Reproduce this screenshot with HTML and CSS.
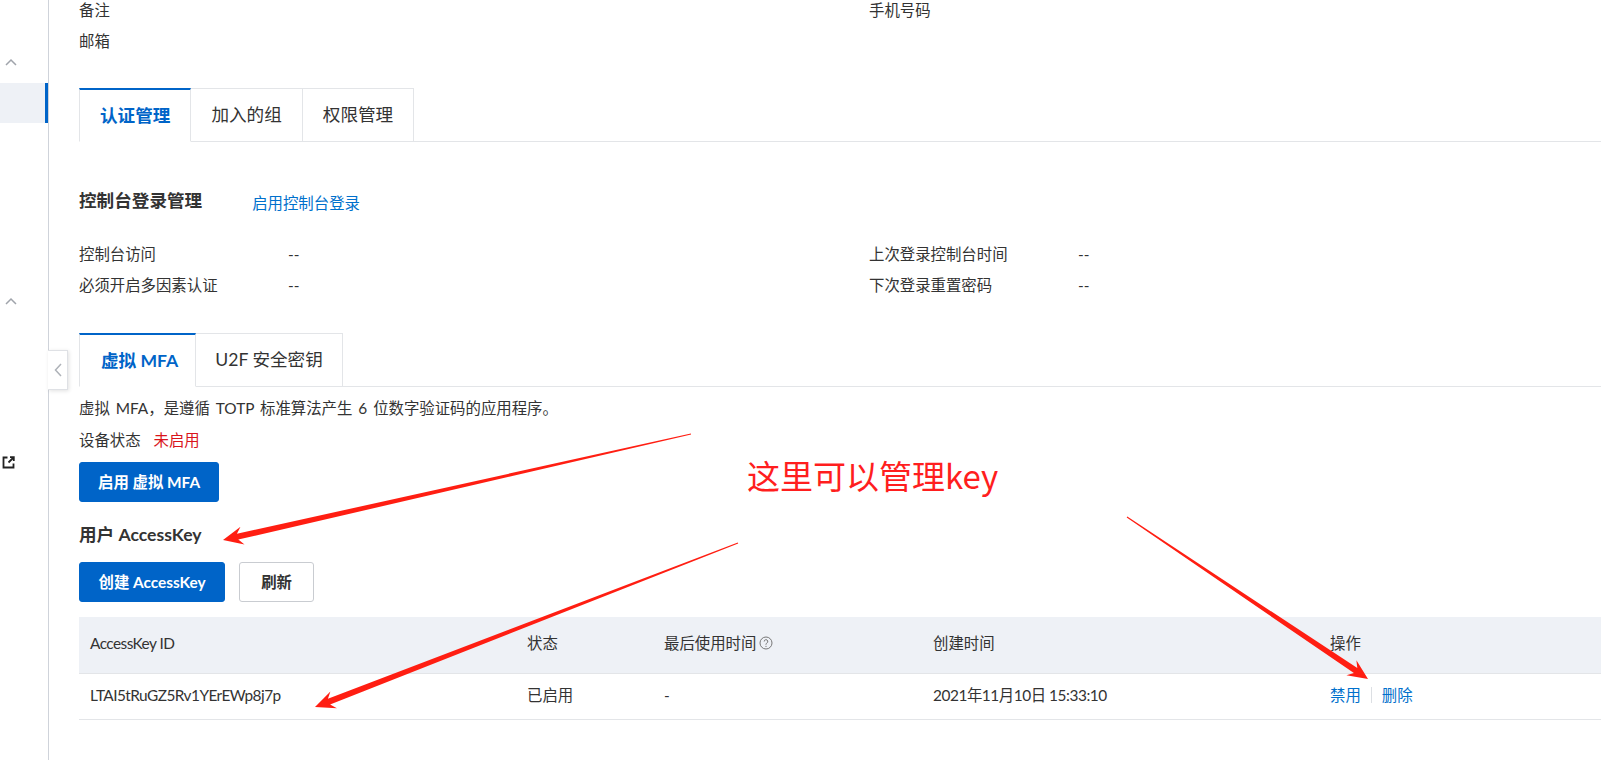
FILE: index.html
```html
<!DOCTYPE html>
<html lang="zh-CN">
<head>
<meta charset="utf-8">
<title>RAM 用户</title>
<link rel="stylesheet" href="styles.css">
</head>
<body>
<div class="page">
  <aside class="sidebar">
    <div class="nav-gap nav-gap-top"></div>
    <div class="nav-head">
      <svg class="chev" width="12" height="8" viewBox="0 0 12 8"><path d="M1 7L6 2l5 5" fill="none" stroke="#a0a4ab" stroke-width="1.5"/></svg>
    </div>
    <div class="nav-item is-active"></div>
    <div class="nav-gap nav-gap-mid"></div>
    <div class="nav-head">
      <svg class="chev" width="12" height="8" viewBox="0 0 12 8"><path d="M1 7L6 2l5 5" fill="none" stroke="#a0a4ab" stroke-width="1.5"/></svg>
    </div>
    <div class="nav-gap nav-gap-low"></div>
    <div class="nav-item">
      <svg class="ext" width="13" height="13" viewBox="0 0 13 13"><path d="M5.5 1.5H1.5v10h10V7.5" fill="none" stroke="#222" stroke-width="1.8"/><path d="M6.5 6.5l5-5M8 1.2h3.8V5" fill="none" stroke="#222" stroke-width="1.8"/></svg>
    </div>
  </aside>

  <main class="main">
    <div class="kv-grid top-info">
      <div class="kv">备注</div>
      <div class="kv">手机号码</div>
      <div class="kv">邮箱</div>
      <div class="kv"></div>
    </div>

    <div class="tabs main-tabs">
      <div class="tab is-active">认证管理</div>
      <div class="tab">加入的组</div>
      <div class="tab">权限管理</div>
    </div>

    <div class="section-head">
      <h2 class="section-title">控制台登录管理</h2>
      <a class="head-link">启用控制台登录</a>
    </div>

    <div class="kv-grid login-info">
      <div class="kv"><span class="kv-label">控制台访问</span><span>--</span></div>
      <div class="kv"><span class="kv-label">上次登录控制台时间</span><span>--</span></div>
      <div class="kv"><span class="kv-label">必须开启多因素认证</span><span>--</span></div>
      <div class="kv"><span class="kv-label">下次登录重置密码</span><span>--</span></div>
    </div>

    <div class="tabs sub-tabs">
      <div class="tab is-active">虚拟 MFA</div>
      <div class="tab">U2F 安全密钥</div>
    </div>

    <p class="desc">虚拟 MFA，是遵循 TOTP 标准算法产生 6 位数字验证码的应用程序。</p>
    <p class="status"><span class="status-label">设备状态</span><span class="status-off">未启用</span></p>
    <div class="btn-row mfa-row">
      <button class="btn btn-primary btn-mfa">启用 虚拟 MFA</button>
    </div>

    <h3 class="ak-title">用户 AccessKey</h3>
    <div class="btn-row ak-row">
      <button class="btn btn-primary btn-create">创建 AccessKey</button>
      <button class="btn btn-default">刷新</button>
    </div>

    <div class="ak-table">
      <div class="tr thead">
        <div class="td latin-tight">AccessKey ID</div>
        <div class="td">状态</div>
        <div class="td">最后使用时间
          <svg class="qicon" width="14" height="14" viewBox="0 0 14 14"><circle cx="7" cy="7" r="6" fill="none" stroke="#777" stroke-width="1"/><path d="M5.2 5.5a1.8 1.8 0 1 1 2.6 1.6c-.6.3-.8.6-.8 1.2v.5" fill="none" stroke="#777" stroke-width="1"/><circle cx="7" cy="10.3" r=".65" fill="#777"/></svg>
        </div>
        <div class="td">创建时间</div>
        <div class="td">操作</div>
      </div>
      <div class="tr tbody">
        <div class="td latin-tight">LTAI5tRuGZ5Rv1YErEWp8j7p</div>
        <div class="td">已启用</div>
        <div class="td">-</div>
        <div class="td latin-tight date">2021年11月10日 15:33:10</div>
        <div class="td actions"><a class="act">禁用</a><span class="sep"></span><a class="act">删除</a></div>
      </div>
    </div>
  </main>

  <button class="collapse" aria-label="收起">
    <svg width="8" height="14" viewBox="0 0 8 14"><path d="M7 1L1.5 7 7 13" fill="none" stroke="#aeb2b8" stroke-width="1.5"/></svg>
  </button>

  <svg class="annot-arrows" width="1601" height="760" viewBox="0 0 1601 760">
    <polygon fill="#ff1e12" points="223,540 240.5,526.8 236.9,533.8 690.9,433.4 691.1,434.6 238.3,539.6 244.5,544.4"/>
    <polygon fill="#ff1e12" points="315,707 330.4,691.4 327.9,698.8 737.8,542.4 738.2,543.6 330.1,704.4 336.9,708.2"/>
    <polygon fill="#ff1e12" points="1368,679 1346.4,675.3 1353.9,673.1 1126.7,517.5 1127.3,516.5 1357.3,668.1 1356.4,660.3"/>
  </svg>
  <div class="annot-text">这里可以管理key</div>
</div>
</body>
</html>
```

FILE: styles.css
```css
* { box-sizing: border-box; }

html, body {
  margin: 0;
  padding: 0;
  width: 1601px;
  height: 760px;
  overflow: hidden;
  background: #fff;
}

body {
  font-family: Lato, "Noto Sans CJK SC", sans-serif;
  font-size: 15.4px;
  color: #333;
  line-height: 24px;
}

.page {
  position: relative;
  display: flex;
  width: 1601px;
  height: 760px;
}

/* ---------- sidebar ---------- */
.sidebar {
  flex: 0 0 49px;
  width: 49px;
  height: 760px;
  border-right: 1px solid #cfd3da;
  display: flex;
  flex-direction: column;
}

.nav-gap-top { height: 42px; }
.nav-gap-mid { height: 158px; }
.nav-gap-low { height: 121px; }

.nav-head {
  height: 40px;
  display: flex;
  align-items: center;
  padding-left: 5px;
}

.nav-item {
  height: 40px;
  display: flex;
  align-items: center;
  padding-left: 2px;
}

.nav-item.is-active {
  margin-top: 1px;
  background: #eef1f6;
  border-right: 3px solid #0064c8;
}

.chev, .ext { display: block; }

/* ---------- main ---------- */
.main {
  flex: 1 1 auto;
  min-width: 0;
  padding-left: 30px;
}

.kv-grid {
  display: grid;
  grid-template-columns: 790px 1fr;
  row-gap: 7px;
}

.kv {
  display: flex;
  height: 24px;
  line-height: 20px;
  white-space: nowrap;
}

.kv-label {
  width: 209px;
  flex: 0 0 209px;
}

/* tabs */
.tabs {
  display: flex;
  border-bottom: 1px solid #e3e5e8;
}

.tab {
  height: 54px;
  margin-bottom: -1px;
  padding: 0 20px;
  display: flex;
  align-items: center;
  font-size: 17.6px;
  color: #333;
  background: #fff;
  border-top: 1px solid #e3e5e8;
  border-right: 1px solid #e3e5e8;
  border-bottom: 1px solid #e3e5e8;
  white-space: nowrap;
}

.tab:first-child { border-left: 1px solid #e3e5e8; }

.tab.is-active {
  border-top: 2px solid #0064c8;
  border-bottom-color: #fff;
  color: #0064c8;
  font-weight: 700;
}

.main-tabs { margin-top: 33px; }
.sub-tabs { margin-top: 34px; }
.sub-tabs .tab:first-child { padding: 0 17px 0 21px; }
.sub-tabs .tab:nth-child(2) { padding: 0 19px; }

/* section heading */
.section-head {
  display: flex;
  align-items: flex-start;
  margin-top: 48px;
  height: 24px;
}

.section-title {
  margin: 0;
  font-size: 17.6px;
  font-weight: 700;
  line-height: 22px;
  color: #333;
}

.head-link {
  margin-left: 50px;
  margin-top: 1px;
  font-size: 15.4px;
  line-height: 24px;
  color: #0070cc;
  cursor: pointer;
}

.login-info { margin-top: 30px; }

.desc {
  margin: 11px 0 0;
  height: 24px;
  line-height: 20px;
  word-spacing: 2px;
}

.status {
  margin: 8px 0 0;
  height: 24px;
  line-height: 20px;
  display: flex;
}

.status-label { margin-right: 13px; }
.status-off { color: #d9141b; }

.btn-row {
  display: flex;
  gap: 14px;
}

.mfa-row { margin-top: 8px; }

.btn {
  height: 40px;
  border-radius: 3px;
  font-family: inherit;
  font-size: 15.4px;
  font-weight: 700;
  line-height: 38px;
  padding: 0 21px;
  cursor: pointer;
}

.btn-primary {
  background: #0064c8;
  border: 1px solid #0064c8;
  color: #fff;
}

.btn-mfa { padding: 0 18px; }
.btn-create { padding: 0 18.5px; }

.btn-default {
  background: #fff;
  border: 1px solid #c9ccd1;
  color: #333;
}

.ak-title {
  margin: 22px 0 0;
  height: 24px;
  font-size: 17.6px;
  font-weight: 700;
  line-height: 21px;
  color: #333;
}

.ak-row { margin-top: 14px; }

/* table */
.ak-table { margin-top: 15px; }

.tr {
  display: grid;
  grid-template-columns: 437px 137px 269px 397px 1fr;
  border-bottom: 1px solid #e3e5e8;
}

.thead {
  height: 57px;
  background: #eef1f6;
}

.tbody { height: 46px; }

.td {
  display: flex;
  align-items: center;
  padding: 0 0 4px 11px;
  white-space: nowrap;
}

.latin-tight { letter-spacing: -0.55px; }
.date { letter-spacing: -0.45px; }

.qicon {
  margin-left: 3px;
  display: block;
}

.act {
  color: #0070cc;
  cursor: pointer;
}

.sep {
  width: 1px;
  height: 16px;
  background: #dcdfe3;
  margin: 0 10px;
}

/* overlays */
.collapse {
  position: absolute;
  left: 48px;
  top: 350px;
  width: 20px;
  height: 40px;
  padding: 0;
  background: #fff;
  border: 1px solid #dfe1e5;
  border-left: none;
  box-shadow: 1px 1px 4px rgba(0, 0, 0, 0.12);
  display: flex;
  align-items: center;
  justify-content: center;
}

.collapse svg { display: block; }

.annot-arrows {
  position: absolute;
  left: 0;
  top: 0;
  pointer-events: none;
}

.annot-text {
  position: absolute;
  left: 747px;
  top: 455px;
  font-family: "Noto Sans CJK SC", sans-serif;
  font-size: 33px;
  line-height: 40px;
  color: #ff1e1e;
  white-space: nowrap;
  pointer-events: none;
}
```
